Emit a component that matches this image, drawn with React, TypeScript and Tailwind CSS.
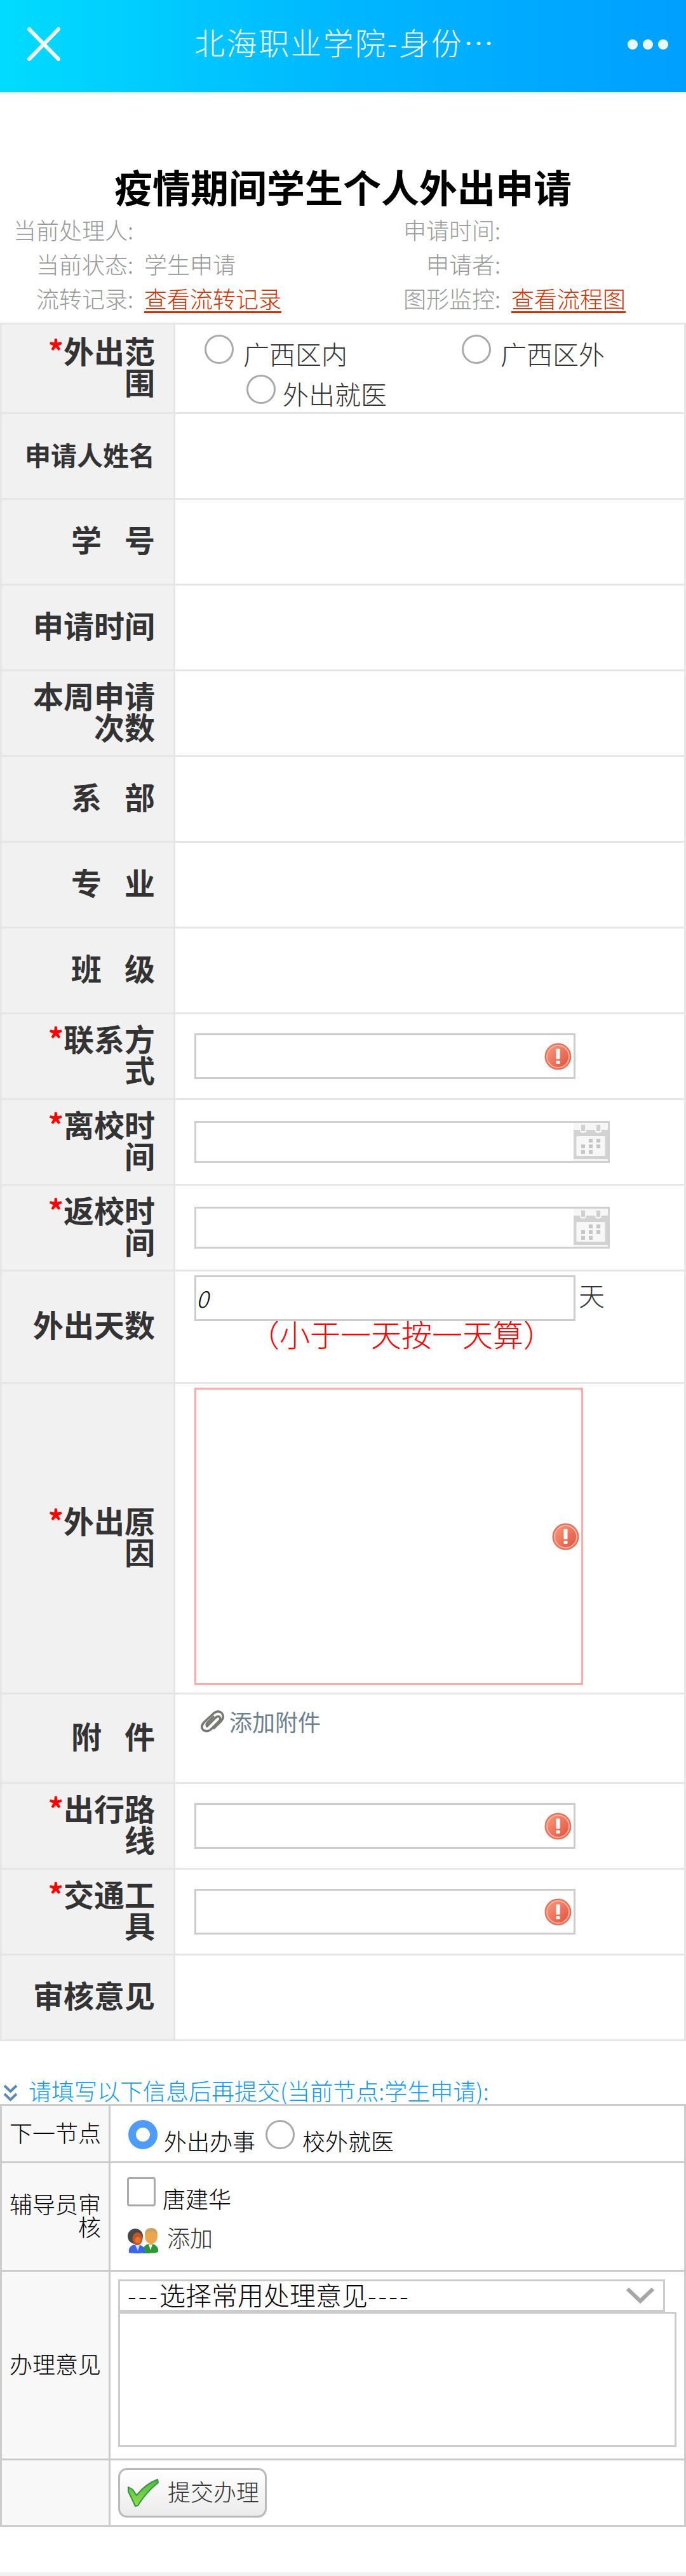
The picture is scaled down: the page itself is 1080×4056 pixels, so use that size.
import type { ReactNode } from "react";

function AlertIcon() {
  return (
    <svg viewBox="0 0 43 43" className="h-[43px] w-[43px] shrink-0">
      <defs>
        <linearGradient id="alert" x1="0" y1="0" x2="1" y2="1">
          <stop offset="0" stopColor="#fb9a7c" />
          <stop offset="1" stopColor="#e2503e" />
        </linearGradient>
      </defs>
      <circle cx="21.5" cy="21.5" r="21" fill="#e5705c" />
      <circle cx="21.5" cy="21.5" r="17.5" fill="url(#alert)" stroke="#f9b29e" strokeWidth="2" />
      <rect x="18.5" y="9.500" width="6" height="16" rx="1" fill="#fff" />
      <rect x="18.500" y="28" width="6" height="5" rx="1" fill="#fff" />
    </svg>
  );
}

function CalendarIcon() {
  const dots = [
    [27, 28], [39, 28],
    [15, 37], [27, 37], [39, 37],
    [15, 46], [27, 46],
  ];
  return (
    <svg viewBox="0 0 54 60" className="h-[60px] w-[54px] shrink-0">
      <rect width="54" height="60" fill="#f6f6f6" />
      <rect y="11" width="54" height="46" fill="#d2d2d2" />
      <rect x="4.500" y="21" width="45" height="31" rx="1" fill="#f7f7f7" />
      <path d="M10 0h10v14q-5 4-10 0zM34 0h10v14q-5 4-10 0z" fill="#f6f6f6" />
      <rect x="12" y="3" width="6" height="10" fill="#cfcfcf" />
      <rect x="36" y="3" width="6" height="10" fill="#cfcfcf" />
      {dots.map(([x, y]) => (
        <rect key={x + "-" + y} x={x - 3} y={y - 3} width="6" height="6" fill="#c6c6c6" />
      ))}
    </svg>
  );
}

function PeopleIcon() {
  return (
    <svg viewBox="0 0 48 40" className="h-10 w-12 shrink-0">
      <path d="M24 40v-7q3-8 12-8 9 0 12 8v5q-6 2-24 2z" fill="#2b9a34" />
      <path d="M33 26h6l-3 9z" fill="#fff" />
      <ellipse cx="37" cy="13" rx="10" ry="12" fill="#eda64b" />
      <path d="M27 11Q27 0 37 0t10 11q-5-6-10-5-6-1-10 5z" fill="#c9a45c" />
      <path d="M2 39v-6q3-7 12-7t13 7v6q-11 2-25 0z" fill="#3a67ea" />
      <path d="M12 27h7l-3 9z" fill="#cfe0ff" />
      <ellipse cx="12" cy="13" rx="12" ry="12" fill="#4a4748" />
      <ellipse cx="15.500" cy="17" rx="8" ry="10" fill="#c4561f" />
      <ellipse cx="16" cy="19" rx="4.500" ry="5" fill="#e8742b" />
    </svg>
  );
}

function CheckIcon() {
  return (
    <svg viewBox="0 0 49 44" className="h-11 w-[49px] shrink-0">
      <defs>
        <linearGradient id="check" x1="0" y1="0" x2="0" y2="1">
          <stop offset="0" stopColor="#4fbf35" />
          <stop offset="1" stopColor="#8fdd4c" />
        </linearGradient>
      </defs>
      <path d="M1 13l7 4 6 9Q28 8 47 1l1 5Q30 20 16 42l-4 1Q6 30 1 20z" fill="url(#check)" stroke="#2f9345" strokeWidth="2" strokeLinejoin="round" />
    </svg>
  );
}

function Radio({ checked = false }: { checked?: boolean }) {
  return checked ? (
    <span className="h-[46px] w-[46px] shrink-0 rounded-full border-[12px] border-[#4d9bfa] bg-white" />
  ) : (
    <span className="h-[46px] w-[46px] shrink-0 rounded-full border-[3px] border-[#a9a9a9] bg-white" />
  );
}

function Star() {
  return <span className="text-[#ff0000]">*</span>;
}

function Row({ label, height, children }: { label: ReactNode; height: string; children?: ReactNode }) {
  return (
    <div className={"flex border-b-[3px] border-[#e6e6e6] " + height}>
      <div className="flex w-[273px] shrink-0 items-center justify-end border-r-[3px] border-[#e6e6e6] bg-[#f1f1f1] pr-[29px] pb-[9px] text-right text-[48px] leading-[49px] font-bold whitespace-nowrap text-[#333]">
        <div>{label}</div>
      </div>
      <div className="flex-1 pl-[30px]">{children}</div>
    </div>
  );
}

function Field() {
  return (
    <div className="flex h-full items-center">
      <div className="flex h-[72px] w-[600px] items-center justify-end border-[3px] border-[#ccc] pr-[3px]">
        <AlertIcon />
      </div>
    </div>
  );
}

function DateField() {
  return (
    <div className="flex h-full items-center">
      <div className="flex h-[66px] w-[654px] items-center justify-end border-[3px] border-[#d0d0d0]">
        <CalendarIcon />
      </div>
    </div>
  );
}

function FlowRow({ label, height, children }: { label?: ReactNode; height: string; children?: ReactNode }) {
  return (
    <div className={"flex border-b-[3px] border-[#ccc] " + height}>
      <div className="flex w-[171px] shrink-0 items-center justify-end border-r-[3px] border-[#ccc] bg-[#f8f8f8] pr-[12px] pb-[6px] text-right text-[36px] leading-[36px] whitespace-nowrap text-black">
        <div>{label}</div>
      </div>
      <div className="flex-1">{children}</div>
    </div>
  );
}

function Meta({ left, leftValue, right, rightValue }: { left: string; leftValue?: ReactNode; right: string; rightValue?: ReactNode }) {
  return (
    <div className="flex h-[54px] items-center text-[36px] leading-[54px] text-[#999]">
      <div className="w-[210px] text-right">{left}</div>
      <div className="w-[410px] pl-[17px]">{leftValue}</div>
      <div className="w-[168px] text-right">{right}</div>
      <div className="pl-[17px]">{rightValue}</div>
    </div>
  );
}

function Link({ children }: { children: ReactNode }) {
  return (
    <a className="block h-[45px] border-b-[3px] border-[#cc3300] leading-[42px] text-[#cc3300]">{children}</a>
  );
}

export default function App() {
  return (
    <div className="flex h-[4056px] w-[1080px] flex-col overflow-hidden bg-white font-['Noto_Sans_CJK_SC',sans-serif] font-light">
      <header className="flex h-[145px] shrink-0 bg-linear-to-r from-[#00dcff] via-[#00b7ff] to-[#009fff] pt-[35px]">
        <div className="w-[306px] pt-2 pl-[43px]">
          <svg viewBox="0 0 52 53" className="h-[53px] w-[52px]">
            <path d="M3 3l46 47M49 3L3 50" stroke="#fff" strokeWidth="6" strokeLinecap="round" />
          </svg>
        </div>
        <div className="w-[682px] text-[48px] leading-[60px] tracking-[2.600px] text-white">北海职业学院-身份…</div>
        <div className="flex gap-2 pt-[27px]">
          <span className="h-4 w-4 rounded-full bg-[#e8f8ff]" />
          <span className="h-4 w-4 rounded-full bg-[#e8f8ff]" />
          <span className="h-4 w-4 rounded-full bg-[#e8f8ff]" />
        </div>
      </header>

      <h1 className="mt-[112px] h-[77px] shrink-0 text-center text-[60px] leading-[72px] font-bold text-black">
        疫情期间学生个人外出申请
      </h1>
      <div className="h-[174px] shrink-0">
        <Meta left="当前处理人:" right="申请时间:" />
        <Meta left="当前状态:" leftValue="学生申请" right="申请者:" />
        <Meta
          left="流转记录:"
          leftValue={<div className="flex pt-[2px]"><Link>查看流转记录</Link></div>}
          right="图形监控:"
          rightValue={<div className="flex pt-[2px]"><Link>查看流程图</Link></div>}
        />
      </div>

      <main className="shrink-0 border-x-[3px] border-t-[3px] border-[#e6e6e6]">
        <Row label={<><Star />外出范<br />围</>} height="h-[141px]">
          <div className="pt-[16px] text-[41px] leading-[58px] text-[#333]">
            <div className="flex h-[63px] pl-[16px]">
              <div className="flex w-[405px] gap-[15px]"><Radio /><span>广西区内</span></div>
              <div className="flex gap-[15px]"><Radio /><span>广西区外</span></div>
            </div>
            <div className="flex gap-[11px] pl-[82px]"><Radio /><span>外出就医</span></div>
          </div>
        </Row>
        <Row label={<span className="text-[41px]">申请人姓名</span>} height="h-[135px]" />
        <Row label={<div className="flex gap-9"><span>学</span><span>号</span></div>} height="h-[135px]" />
        <Row label="申请时间" height="h-[135px]" />
        <Row label={<>本周申请<br />次数</>} height="h-[135px]" />
        <Row label={<div className="flex gap-9"><span>系</span><span>部</span></div>} height="h-[135px]" />
        <Row label={<div className="flex gap-9"><span>专</span><span>业</span></div>} height="h-[135px]" />
        <Row label={<div className="flex gap-9"><span>班</span><span>级</span></div>} height="h-[135px]" />
        <Row label={<><Star />联系方<br />式</>} height="h-[135px]"><Field /></Row>
        <Row label={<><Star />离校时<br />间</>} height="h-[135px]"><DateField /></Row>
        <Row label={<><Star />返校时<br />间</>} height="h-[135px]"><DateField /></Row>
        <Row label="外出天数" height="h-[177px]">
          <div className="flex gap-[5px] pt-[6px] text-[41px] text-[#333]">
            <div className="h-[72px] w-[600px] border-[3px] border-[#ccc] text-[36px] leading-[64px] text-black italic">0</div>
            <span className="leading-[60px]">天</span>
          </div>
          <p className="-mt-[3px] pl-[86px] text-[48px] leading-[44px] whitespace-nowrap text-[#ff0000]">（小于一天按一天算）</p>
        </Row>
        <Row label={<><Star />外出原<br />因</>} height="h-[489px]">
          <div className="pt-[6px]">
            <div className="flex h-[468px] w-[612px] items-center justify-end border-[3px] border-[#fcaaaa] pr-[3px]">
              <AlertIcon />
            </div>
          </div>
        </Row>
        <Row label={<div className="flex gap-9"><span>附</span><span>件</span></div>} height="h-[141px]">
          <div className="flex items-center gap-[7px] pt-[20px] pl-[9px] text-[36px] leading-[44px] font-normal text-[#6e7f90]">
            <svg viewBox="0 0 39 36" className="h-9 w-[39px]" fill="none" stroke="#77786f" strokeWidth="3.500" strokeLinecap="round">
              <path d="M11 26L25 12q4-3 6 0 2 3-1 6L17 31q-6 5-12 1-5-5 1-12L21 6q7-6 13-1 5 6-1 13L22 29" />
              <path d="M11 26q-2-3 1-6l9-9" />
            </svg>
            添加附件
          </div>
        </Row>
        <Row label={<><Star />出行路<br />线</>} height="h-[135px]"><Field /></Row>
        <Row label={<><Star />交通工<br />具</>} height="h-[135px]"><Field /></Row>
        <Row label="审核意见" height="h-[135px]" />
      </main>

      <div className="flex h-[99px] shrink-0 items-end gap-[17px] pl-[5px] text-[36px] leading-[38px] text-[#0f98f5]">
        <svg viewBox="0 0 23 27" className="mb-[4px] h-[27px] w-[23px]" fill="none" stroke="#5a88bd" strokeWidth="4">
          <path d="M2 2l9.500 9L21 2M2 15l9.500 9L21 15" />
        </svg>
        <span className="pb-[3px]">请填写以下信息后再提交(当前节点:学生申请):</span>
      </div>

      <section className="shrink-0 border-x-[3px] border-t-[3px] border-[#ccc]">
        <FlowRow label="下一节点" height="h-[90px]">
          <div className="flex pt-[22px] pl-[28px] text-[36px] leading-[66px] text-black">
            <Radio checked />
            <span className="-mt-px ml-[10px] h-[46px] w-[160px]">外出办事</span>
            <Radio />
            <span className="-mt-px ml-[12px] h-[46px]">校外就医</span>
          </div>
        </FlowRow>
        <FlowRow label={<>辅导员审<br />核</>} height="h-[171px]">
          <div className="flex h-[102px] pt-[22px] pl-[26px] text-[36px] leading-[66px] text-black">
            <span className="h-[46px] w-[45px] rounded-[4px] border-[3px] border-[#a9a9a9]" />
            <span className="ml-[11px]">唐建华</span>
          </div>
          <div className="flex gap-[14px] pl-[27px] text-[36px] leading-[28px] text-[#333]">
            <PeopleIcon />
            <span>添加</span>
          </div>
        </FlowRow>
        <FlowRow label="办理意见" height="h-[297px]">
          <div className="pt-3 pl-3">
            <div className="flex h-[51px] w-[861px] items-center justify-between border-[3px] border-[#ccc] pr-[14px] pl-[12px] text-[41px] leading-[45px] text-black">
              <span className="pb-[5px]">
                <span className="tracking-[3px]">---</span>选择常用处理意见<span className="tracking-[3px]">----</span>
              </span>
              <svg viewBox="0 0 44 26" className="h-[26px] w-11" fill="none" stroke="#a6a6a6" strokeWidth="6">
                <path d="M2 2l20 19L42 2" />
              </svg>
            </div>
            <div className="h-[213px] w-[879px] border-[3px] border-[#ccc]" />
          </div>
        </FlowRow>
        <FlowRow height="h-[105px]">
          <div className="pt-3 pl-3">
            <div className="flex h-[78px] w-[234px] items-center gap-[14px] rounded-[14px] border-[3px] border-[#b9b9b9] bg-linear-to-b from-white to-[#ebebeb] pl-[12px] text-[36px] leading-[60px] whitespace-nowrap text-[#333]">
              <CheckIcon />
              <span className="pb-[6px]">提交办理</span>
            </div>
          </div>
        </FlowRow>
      </section>
      <footer className="mt-auto h-[6px] shrink-0 bg-[#f1f1f1]" />
    </div>
  );
}
